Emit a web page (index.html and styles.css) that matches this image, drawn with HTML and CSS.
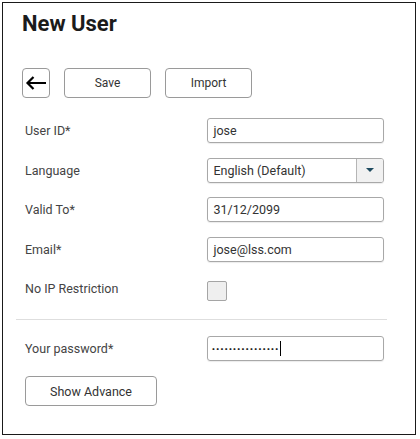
FILE: index.html
```html
<!DOCTYPE html>
<html>
<head>
<meta charset="utf-8">
<link rel="stylesheet" href="styles.css">
</head>
<body>
<div class="window">
  <h1 class="title">New User</h1>
  <div class="toolbar">
    <button class="btn btn-back" aria-label="Back">
      <svg width="22" height="16" viewBox="0 0 22 16"><path d="M21 8H2.5M8.5 2L2.5 8l6 6" fill="none" stroke="#000" stroke-width="2.2"/></svg>
    </button>
    <button class="btn btn-wide">Save</button>
    <button class="btn btn-wide">Import</button>
  </div>
  <div class="form">
    <div class="row"><span class="label">User ID*</span><div class="field">jose</div></div>
    <div class="row"><span class="label">Language</span>
      <div class="field select"><span class="select-text">English (Default)</span><span class="select-btn"><span class="tri"></span></span></div>
    </div>
    <div class="row"><span class="label">Valid To*</span><div class="field">31/12/2099</div></div>
    <div class="row"><span class="label">Email*</span><div class="field">jose@lss.com</div></div>
    <div class="row"><span class="label">No IP Restriction</span><div class="checkcell"><span class="checkbox"></span></div></div>
  </div>
  <div class="sep"></div>
  <div class="row"><span class="label">Your password*</span><div class="field pwd"><span class="dots">················</span><span class="caret"></span></div></div>
  <button class="btn btn-adv">Show Advance</button>
</div>
</body>
</html>
```
FILE: styles.css
```css
html, body { margin: 0; padding: 0; background: #fff; }
body { font-family: Roboto, "Noto Sans", sans-serif; color: #333; }
.window {
  margin: 2px;
  width: 414px;
  height: 433px;
  box-sizing: border-box;
  border: 1px solid #1a1a1a;
  padding: 0 31px 0 19px;
}
.title {
  margin: 8px 0 0 0;
  font-size: 22px;
  line-height: 26px;
  font-weight: 700;
  color: #1b1b1b;
}
.toolbar {
  margin-top: 31px;
  display: flex;
  gap: 14px;
}
.btn {
  box-sizing: border-box;
  height: 30px;
  border: 1px solid #9a9a9a;
  border-radius: 4px;
  background: #fff;
  font-family: Roboto, sans-serif;
  font-size: 12px;
  color: #333;
  padding: 0;
  display: flex;
  align-items: center;
  justify-content: center;
}
.btn-back { width: 28px; }
.btn-wide { width: 87px; }
.form {
  margin-top: 20px;
  display: flex;
  flex-direction: column;
  gap: 14.5px;
}
.row {
  display: flex;
  align-items: center;
  height: 25px;
  padding-left: 3px;
}
.label {
  width: 183px;
  font-size: 12.5px;
  color: #444;
}
.field {
  box-sizing: border-box;
  width: 177px;
  height: 25px;
  border: 1px solid #a8a8a8;
  border-radius: 3px;
  box-shadow: 0 1px 1px rgba(0,0,0,0.08);
  font-size: 12.5px;
  color: #333;
  padding: 0 5px;
  display: flex;
  align-items: center;
}
.select { padding: 0 0 0 5px; overflow: hidden; }
.select-text { flex: 1; }
.select-btn {
  width: 26px;
  height: 100%;
  border-left: 1px solid #b5b5b5;
  background: #f1f1f1;
  display: flex;
  align-items: center;
  justify-content: center;
}
.tri {
  width: 0; height: 0;
  border-left: 4.5px solid transparent;
  border-right: 4.5px solid transparent;
  border-top: 4.5px solid #1e4a5f;
}
.checkcell { width: 177px; height: 25px; display: flex; align-items: center; }
.checkbox {
  box-sizing: border-box;
  width: 20px;
  height: 20px;
  margin-top: 5px;
  border: 1px solid #a5a5a5;
  border-radius: 2px;
  background: #efefef;
}
.sep {
  margin: 18px 0 16px -6px;
  width: 371px;
  height: 1px;
  background: #dedede;
}
.pwd { padding-left: 3px; }
.dots {
  font-size: 13px;
  font-weight: 700;
  letter-spacing: 0.3px;
  color: #222;
}
.caret {
  width: 1px;
  height: 15px;
  background: #000;
  margin-left: 1px;
}
.btn-adv {
  margin: 15px 0 0 3px;
  width: 132px;
  font-size: 12.5px;
}
```
